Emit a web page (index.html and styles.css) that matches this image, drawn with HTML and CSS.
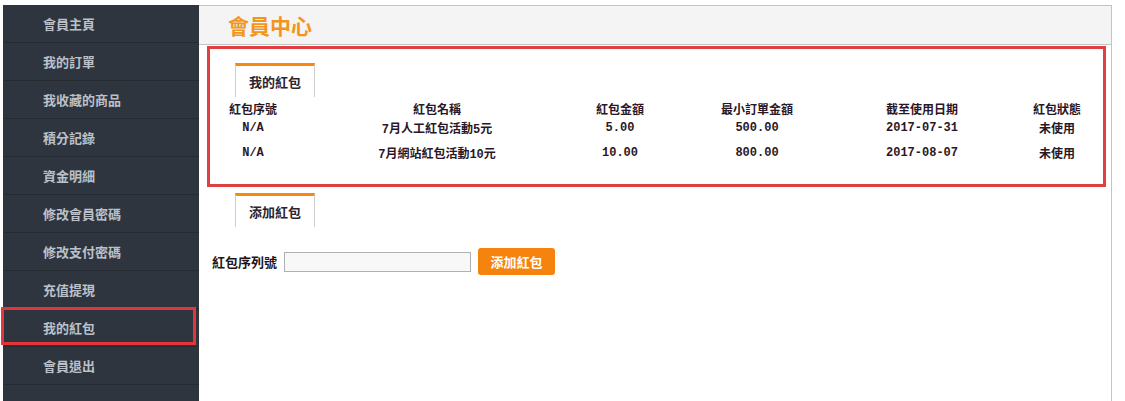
FILE: index.html
```html
<!DOCTYPE html>
<html lang="zh-Hant">
<head>
<meta charset="utf-8">
<title>會員中心</title>
<link rel="stylesheet" href="styles.css">
</head>
<body>
<div class="page">
  <nav class="sidebar">
    <a class="nav-item">會員主頁</a>
    <a class="nav-item">我的訂單</a>
    <a class="nav-item">我收藏的商品</a>
    <a class="nav-item">積分記錄</a>
    <a class="nav-item">資金明細</a>
    <a class="nav-item">修改會員密碼</a>
    <a class="nav-item">修改支付密碼</a>
    <a class="nav-item">充值提現</a>
    <a class="nav-item active">我的紅包</a>
    <a class="nav-item">會員退出</a>
    <div class="nav-empty"></div>
  </nav>
  <main class="main">
    <header class="main-header"><h1 class="title">會員中心</h1></header>
    <section class="bonus-box">
      <div class="tab">我的紅包</div>
      <div class="bonus-table">
        <div class="row head">
          <span class="c1">紅包序號</span><span class="c2">紅包名稱</span><span class="c3">紅包金額</span><span class="c4">最小訂單金額</span><span class="c5">截至使用日期</span><span class="c6">紅包狀態</span>
        </div>
        <div class="row r1">
          <span class="c1">N/A</span><span class="c2">7月人工紅包活動5元</span><span class="c3">5.00</span><span class="c4">500.00</span><span class="c5">2017-07-31</span><span class="c6">未使用</span>
        </div>
        <div class="row r2">
          <span class="c1">N/A</span><span class="c2">7月網站紅包活動10元</span><span class="c3">10.00</span><span class="c4">800.00</span><span class="c5">2017-08-07</span><span class="c6">未使用</span>
        </div>
      </div>
    </section>
    <section class="add-box">
      <div class="tab">添加紅包</div>
      <form class="add-form">
        <label class="add-label">紅包序列號</label>
        <input class="add-input" type="text">
        <button class="add-btn" type="button">添加紅包</button>
      </form>
    </section>
  </main>
</div>
</body>
</html>
```

FILE: styles.css
```css
* { box-sizing: border-box; }
html, body { margin: 0; padding: 0; background: #fff; }
body {
  font-family: "Noto Sans CJK TC", "Noto Sans CJK SC", sans-serif;
  width: 1125px;
  height: 401px;
  overflow: hidden;
}
.page {
  display: flex;
  padding: 5px 0 0 3px;
  height: 401px;
  overflow: hidden;
}
.sidebar {
  width: 196px;
  flex: none;
  background: #2f353e;
  display: flex;
  flex-direction: column;
}
.nav-item {
  position: relative;
  display: flex;
  align-items: center;
  height: 38px;
  flex: none;
  padding-left: 40px;
  color: #bcc1c9;
  font-size: 13px;
  font-weight: bold;
  border-bottom: 1px solid #262b32;
}
.nav-empty { flex: 1 1 auto; min-height: 0; }
.nav-item.active::after {
  content: "";
  position: absolute;
  left: -2px;
  top: -2px;
  right: 3px;
  bottom: 1px;
  border: 3px solid #e2363c;
}
.main {
  width: 913px;
  flex: none;
  border-right: 1px solid #c4c4c4;
  display: flex;
  flex-direction: column;
}
.main-header {
  height: 40px;
  background: #f4f4f4;
  border-top: 1px solid #c4c4c4;
  border-bottom: 1px solid #c4c4c4;
  display: flex;
  align-items: center;
  padding-left: 29px;
}
.title {
  margin: 0;
  font-size: 21px;
  font-weight: bold;
  color: #f3951c;
  line-height: 1;
}
.bonus-box {
  margin: 1px 5px 0 8px;
  border: 3px solid #e0403f;
  padding: 14px 0 16px 12px;
}
.tab {
  width: 80px;
  height: 34px;
  border-top: 3px solid #f7890f;
  border-left: 1px solid #cfcfcf;
  border-right: 1px solid #cfcfcf;
  display: flex;
  align-items: center;
  justify-content: center;
  font-size: 13px;
  font-weight: bold;
  color: #2b2430;
  background: #fff;
}
.bonus-box .tab { margin-left: 13px; }
.bonus-table {
  display: flex;
  flex-direction: column;
  margin-top: 1px;
  color: #2a1626;
  font-size: 12px;
  font-weight: bold;
}
.row {
  display: grid;
  grid-template-columns: 62px 306px 60px 214px 116px 120px;
  align-items: center;
  text-align: center;
}
.row.head { height: 20px; }
.row.r1 { height: 20px; }
.row.r2 { height: 30px; }
.row.r1 span, .row.r2 span {
  font-family: "Liberation Mono", "Noto Sans CJK TC", monospace;
  font-size: 12px;
}
.row span.c6 { padding-left: 34px; }
.add-box {
  margin-top: 6px;
  padding-left: 36px;
}
.add-form {
  display: flex;
  align-items: center;
  margin: 21px 0 0 -23px;
  height: 27px;
}
.add-label {
  font-size: 13px;
  font-weight: bold;
  color: #1d1418;
  margin-right: 7px;
}
.add-input {
  width: 187px;
  height: 20px;
  border: 1px solid #b0b0b0;
  background: #f8f8f8;
  margin: 0;
  padding: 0 4px;
}
.add-btn {
  margin-left: 7px;
  width: 77px;
  height: 27px;
  border: none;
  border-radius: 3px;
  background: #f7830f;
  color: #fff;
  font-family: "Noto Sans CJK TC", sans-serif;
  font-size: 13px;
  font-weight: bold;
  padding: 0;
}
```
